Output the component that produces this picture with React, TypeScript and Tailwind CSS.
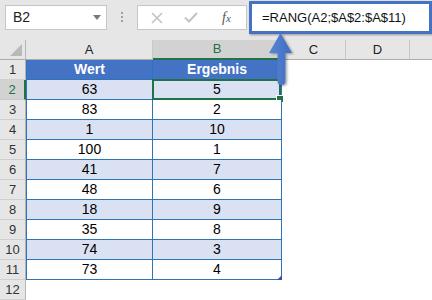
import React from "react";

const values = [
  { wert: 63, rang: 5 },
  { wert: 83, rang: 2 },
  { wert: 1, rang: 10 },
  { wert: 100, rang: 1 },
  { wert: 41, rang: 7 },
  { wert: 48, rang: 6 },
  { wert: 18, rang: 9 },
  { wert: 35, rang: 8 },
  { wert: 74, rang: 3 },
  { wert: 73, rang: 4 },
];

const font = "font-['Liberation_Sans',Arial,sans-serif]";

function RowHead({ n, active }: { n: number; active?: boolean }) {
  return active ? (
    <div className="flex items-center justify-center border-b border-r-2 border-b-[#c8c8c8] border-r-[#217346] bg-[#d2d2d2] text-[13px] text-[#217346]">
      {n}
    </div>
  ) : (
    <div className="flex items-center justify-center border-b border-r border-b-[#cfcfcf] border-r-[#b4b4b4] bg-[#e6e6e6] text-[13px] text-[#333]">
      {n}
    </div>
  );
}

function ColHead({ label, active }: { label: string; active?: boolean }) {
  return active ? (
    <div className="flex items-center justify-center border-r border-b-2 border-r-[#c8c8c8] border-b-[#217346] bg-[#d2d2d2] text-[13px] text-[#217346]">
      {label}
    </div>
  ) : (
    <div className="flex items-center justify-center border-r border-b border-r-[#c8c8c8] border-b-[#acacac] bg-[#e6e6e6] text-[13px] text-[#222]">
      {label}
    </div>
  );
}

function Blank() {
  return <div className="bg-white" />;
}

export default function App() {
  return (
    <div className={`relative h-[300px] w-[432px] overflow-hidden bg-white ${font}`}>
      {/* name box, buttons and formula bar */}
      <div className="flex h-[40px] items-start bg-[#e6e6e6] pl-[5px] pt-[5px]">
        <div className="flex h-[25px] w-[102px] shrink-0 items-center justify-between border border-[#c6c6c6] bg-white pl-[7px] pr-[5px]">
          <span className="text-[14px] text-[#222]">B2</span>
          <svg width="8" height="5" viewBox="0 0 8 5">
            <path d="M0 0h8L4 5z" fill="#7a7a7a" />
          </svg>
        </div>
        <div className="flex w-[30px] shrink-0 flex-col items-center gap-[2px] pt-[7px]">
          <span className="h-[2px] w-[2px] bg-[#a0a0a0]" />
          <span className="h-[2px] w-[2px] bg-[#a0a0a0]" />
          <span className="h-[2px] w-[2px] bg-[#a0a0a0]" />
        </div>
        <div className="flex h-[25px] w-[110px] shrink-0 items-center border border-[#c6c6c6] bg-white">
          <svg className="ml-[13px]" width="12" height="12" viewBox="0 0 12 12">
            <path d="M1 1l10 10M11 1L1 11" stroke="#c3c3c3" strokeWidth="1.6" />
          </svg>
          <svg className="ml-[21px]" width="14" height="11" viewBox="0 0 14 11">
            <path d="M1 5.5l4 4L13 1" fill="none" stroke="#c3c3c3" strokeWidth="2" />
          </svg>
          <span className="ml-[24px] font-['Liberation_Serif',serif] text-[14px] italic text-[#555]">
            f<span className="text-[11px]">x</span>
          </span>
        </div>
        <div className="-mt-[4px] ml-[2px] flex h-[33px] w-[183px] shrink-0 items-center border-[3px] border-[#4472c4] bg-white pl-[10px] shadow-[1px_1px_2px_rgba(0,0,0,0.35)]">
          <span className="text-[13px] text-[#111]">=RANG(A2;$A$2:$A$11)</span>
        </div>
      </div>

      {/* sheet grid */}
      <div className="grid grid-cols-[26px_127px_129px_64px_64px_1fr] auto-rows-[20px] text-[14px]">
        <div className="relative border-r border-b border-r-[#b4b4b4] border-b-[#acacac] bg-[#e6e6e6]">
          <svg className="absolute bottom-[3px] right-[3px]" width="12" height="12" viewBox="0 0 12 12">
            <path d="M12 0v12H0z" fill="#b9b9b9" />
          </svg>
        </div>
        <ColHead label="A" />
        <ColHead label="B" active />
        <ColHead label="C" />
        <ColHead label="D" />
        <div className="border-b border-b-[#acacac] bg-[#e6e6e6]" />

        <RowHead n={1} />
        <div className="flex items-center justify-center border-l border-r border-b border-[#2e75b6] bg-[#4472c4] font-bold text-white">
          Wert
        </div>
        <div className="flex items-center justify-center border-r border-b border-[#2e75b6] bg-[#4472c4] font-bold text-white">
          Ergebnis
        </div>
        <Blank />
        <Blank />
        <Blank />

        {values.map((v, i) => {
          const row = i + 2;
          const shaded = row % 2 === 0 ? "bg-[#d9e1f2]" : "bg-white";
          return (
            <React.Fragment key={row}>
              <RowHead n={row} active={row === 2} />
              <div className={`flex items-center justify-center border-l border-r border-b border-[#2e75b6] text-black ${shaded}`}>
                {v.wert}
              </div>
              <div className={`relative flex items-center justify-center border-r border-b border-[#2e75b6] text-black ${shaded}`}>
                {v.rang}
                {row === 2 && (
                  <>
                    <div className="absolute -left-[1px] -top-[1px] bottom-[-1px] right-0 border-2 border-[#217346]" />
                    <div className="absolute -bottom-[4px] -right-[3px] box-content h-[6px] w-[6px] border border-white bg-[#217346]" />
                  </>
                )}
                {row === 11 && (
                  <svg className="absolute -bottom-[1px] -right-[1px]" width="5" height="5" viewBox="0 0 5 5">
                    <path d="M5 0v5H0z" fill="#3b4cb0" />
                  </svg>
                )}
              </div>
              <Blank />
              <Blank />
              <Blank />
            </React.Fragment>
          );
        })}

        <RowHead n={12} />
        <Blank />
        <Blank />
        <Blank />
        <Blank />
        <Blank />
      </div>

      {/* pointer from the formula bar down to the selected cell */}
      <svg className="absolute left-[262px] top-[30px]" width="40" height="60" viewBox="262 30 40 60">
        <defs>
          <linearGradient id="shaft" x1="0" x2="1" y1="0" y2="0">
            <stop offset="0" stopColor="#5a86d6" />
            <stop offset="1" stopColor="#3f6cbf" />
          </linearGradient>
          <filter id="drop" x="-30%" y="-20%" width="160%" height="140%">
            <feDropShadow dx="1.5" dy="1" stdDeviation="1.2" floodColor="#000" floodOpacity="0.35" />
          </filter>
        </defs>
        <path
          d="M280.5 33L292 53h-6.5v28a4 4 0 0 1-8 0V53H269z"
          fill="url(#shaft)"
          filter="url(#drop)"
        />
      </svg>
    </div>
  );
}
